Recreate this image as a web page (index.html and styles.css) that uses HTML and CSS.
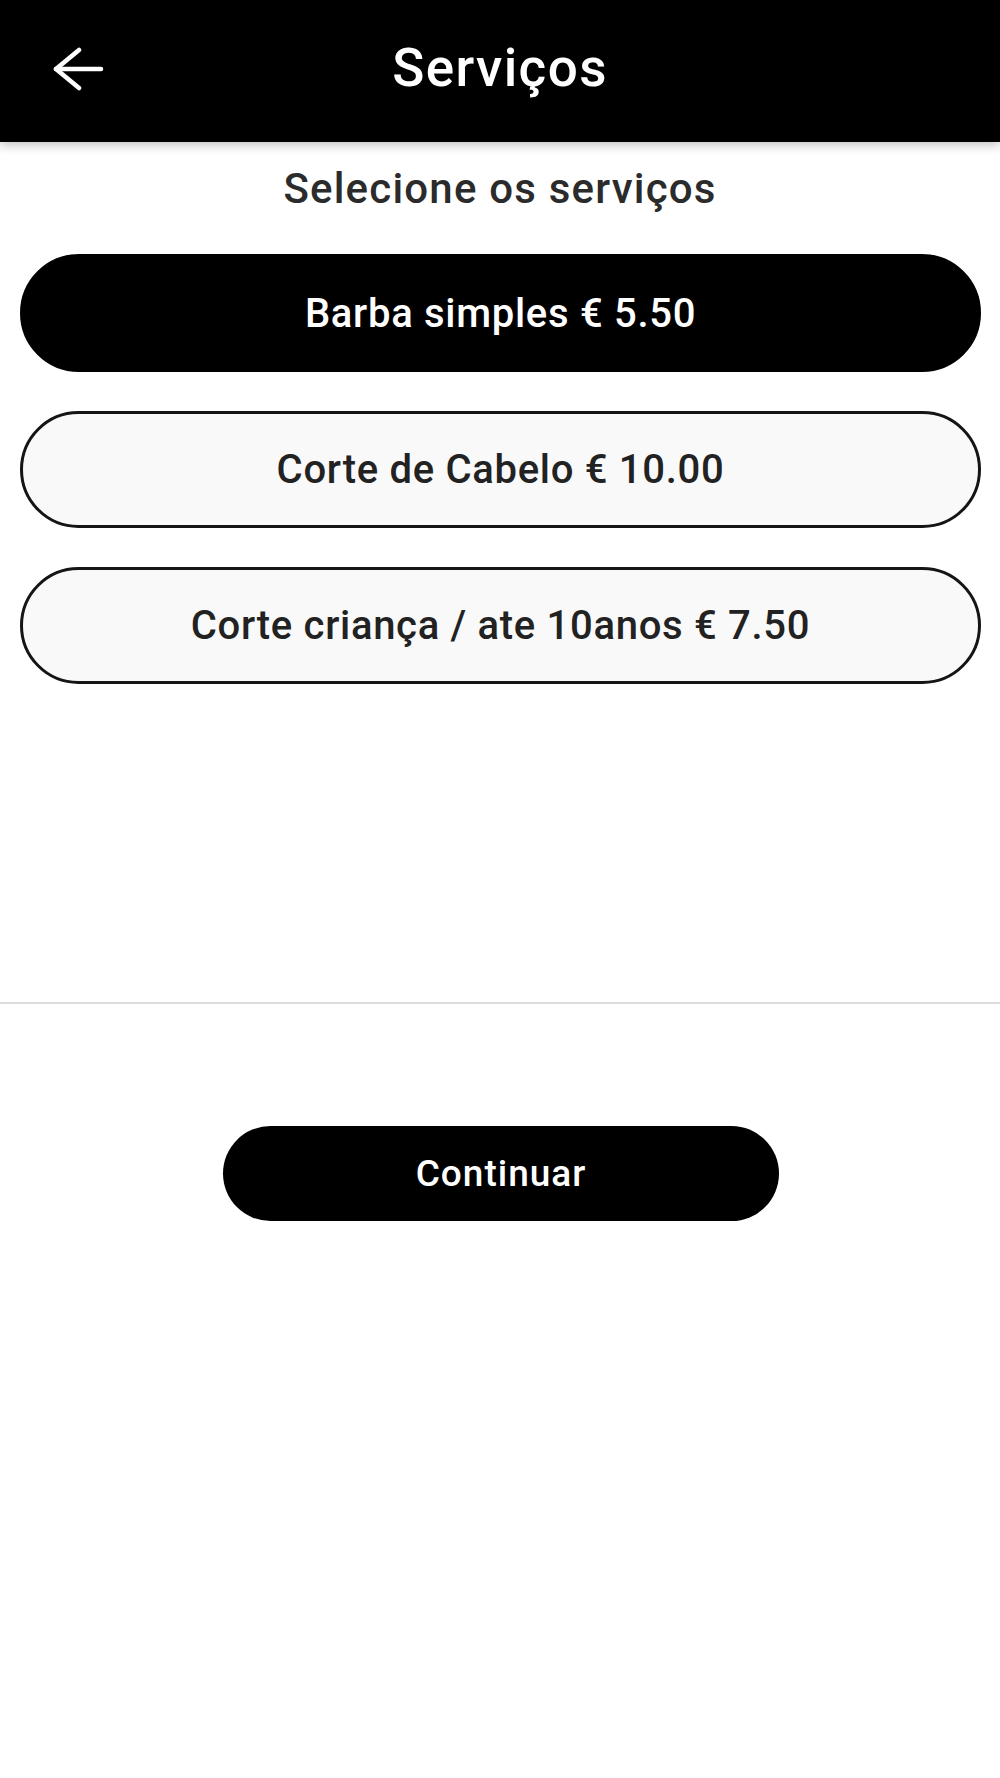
FILE: index.html
```html
<!DOCTYPE html>
<html lang="pt">
<head>
    <meta charset="UTF-8">
    <meta name="viewport" content="width=device-width, initial-scale=1.0">
    <title>Serviços</title>
    <link rel="stylesheet" href="styles.css">
</head>
<body>

<header class="app-bar">
    <button class="back-button" aria-label="Voltar">
        <svg width="52" height="44" viewBox="0 0 52 44" fill="none" stroke="#fff" stroke-width="4.5" stroke-linecap="round" stroke-linejoin="round">
            <path d="M49 22H4"/>
            <path d="M27 3L4 22L27 41"/>
        </svg>
    </button>
    <h1>Serviços</h1>
    <span></span>
</header>

<main class="content">
    <h2 class="subtitle">Selecione os serviços</h2>

    <div class="services">
        <button class="service selected">Barba simples € 5.50</button>
        <button class="service">Corte de Cabelo € 10.00</button>
        <button class="service">Corte criança / ate 10anos € 7.50</button>
    </div>

    <div class="footer">
        <button class="continue-button">Continuar</button>
    </div>
</main>

</body>
</html>
```

FILE: styles.css
```css
body {
    font-family: Roboto, 'Noto Sans', sans-serif;
    margin: 0;
    padding: 0;
    background-color: #ffffff;
    color: #222;
}
button {
    font-family: inherit;
    cursor: pointer;
}
.app-bar {
    display: grid;
    grid-template-columns: 1fr auto 1fr;
    align-items: center;
    height: 142px;
    padding-bottom: 4px;
    box-sizing: border-box;
    background: #000;
    color: white;
    box-shadow: 0 3px 10px rgba(0, 0, 0, 0.25);
    position: relative;
    z-index: 2;
}
.back-button {
    justify-self: start;
    margin-left: 52px;
    padding: 0;
    border: none;
    background: none;
    display: flex;
}
.app-bar h1 {
    margin: 0;
    font-size: 53px;
    font-weight: 500;
    letter-spacing: 1.4px;
    line-height: 1.2;
}
.content {
    padding: 0 20px;
}
.subtitle {
    margin: 22px 0 0;
    text-align: center;
    font-size: 42px;
    line-height: 50px;
    font-weight: 500;
    letter-spacing: 1.2px;
    color: #2b2b2b;
}
.services {
    display: flex;
    flex-direction: column;
    gap: 39px;
    margin-top: 40px;
    height: 748px;
    border-bottom: 2px solid #dcdcdc;
    margin-left: -20px;
    margin-right: -20px;
    padding: 0 19px 0 20px;
}
.service {
    height: 117px;
    border-radius: 60px;
    border: 3px solid #151515;
    background: #f9f9f9;
    color: #222;
    font-size: 40px;
    font-weight: 500;
    letter-spacing: 0.7px;
}
.service.selected {
    background: #000;
    border-color: #000;
    color: #fff;
    height: 118px;
}
.footer {
    display: flex;
    justify-content: center;
    padding-top: 122px;
}
.continue-button {
    width: 556px;
    height: 95px;
    margin-left: 2px;
    border: none;
    border-radius: 48px;
    background: #000;
    color: #fff;
    font-size: 37px;
    font-weight: 500;
    letter-spacing: 1px;
}
```
